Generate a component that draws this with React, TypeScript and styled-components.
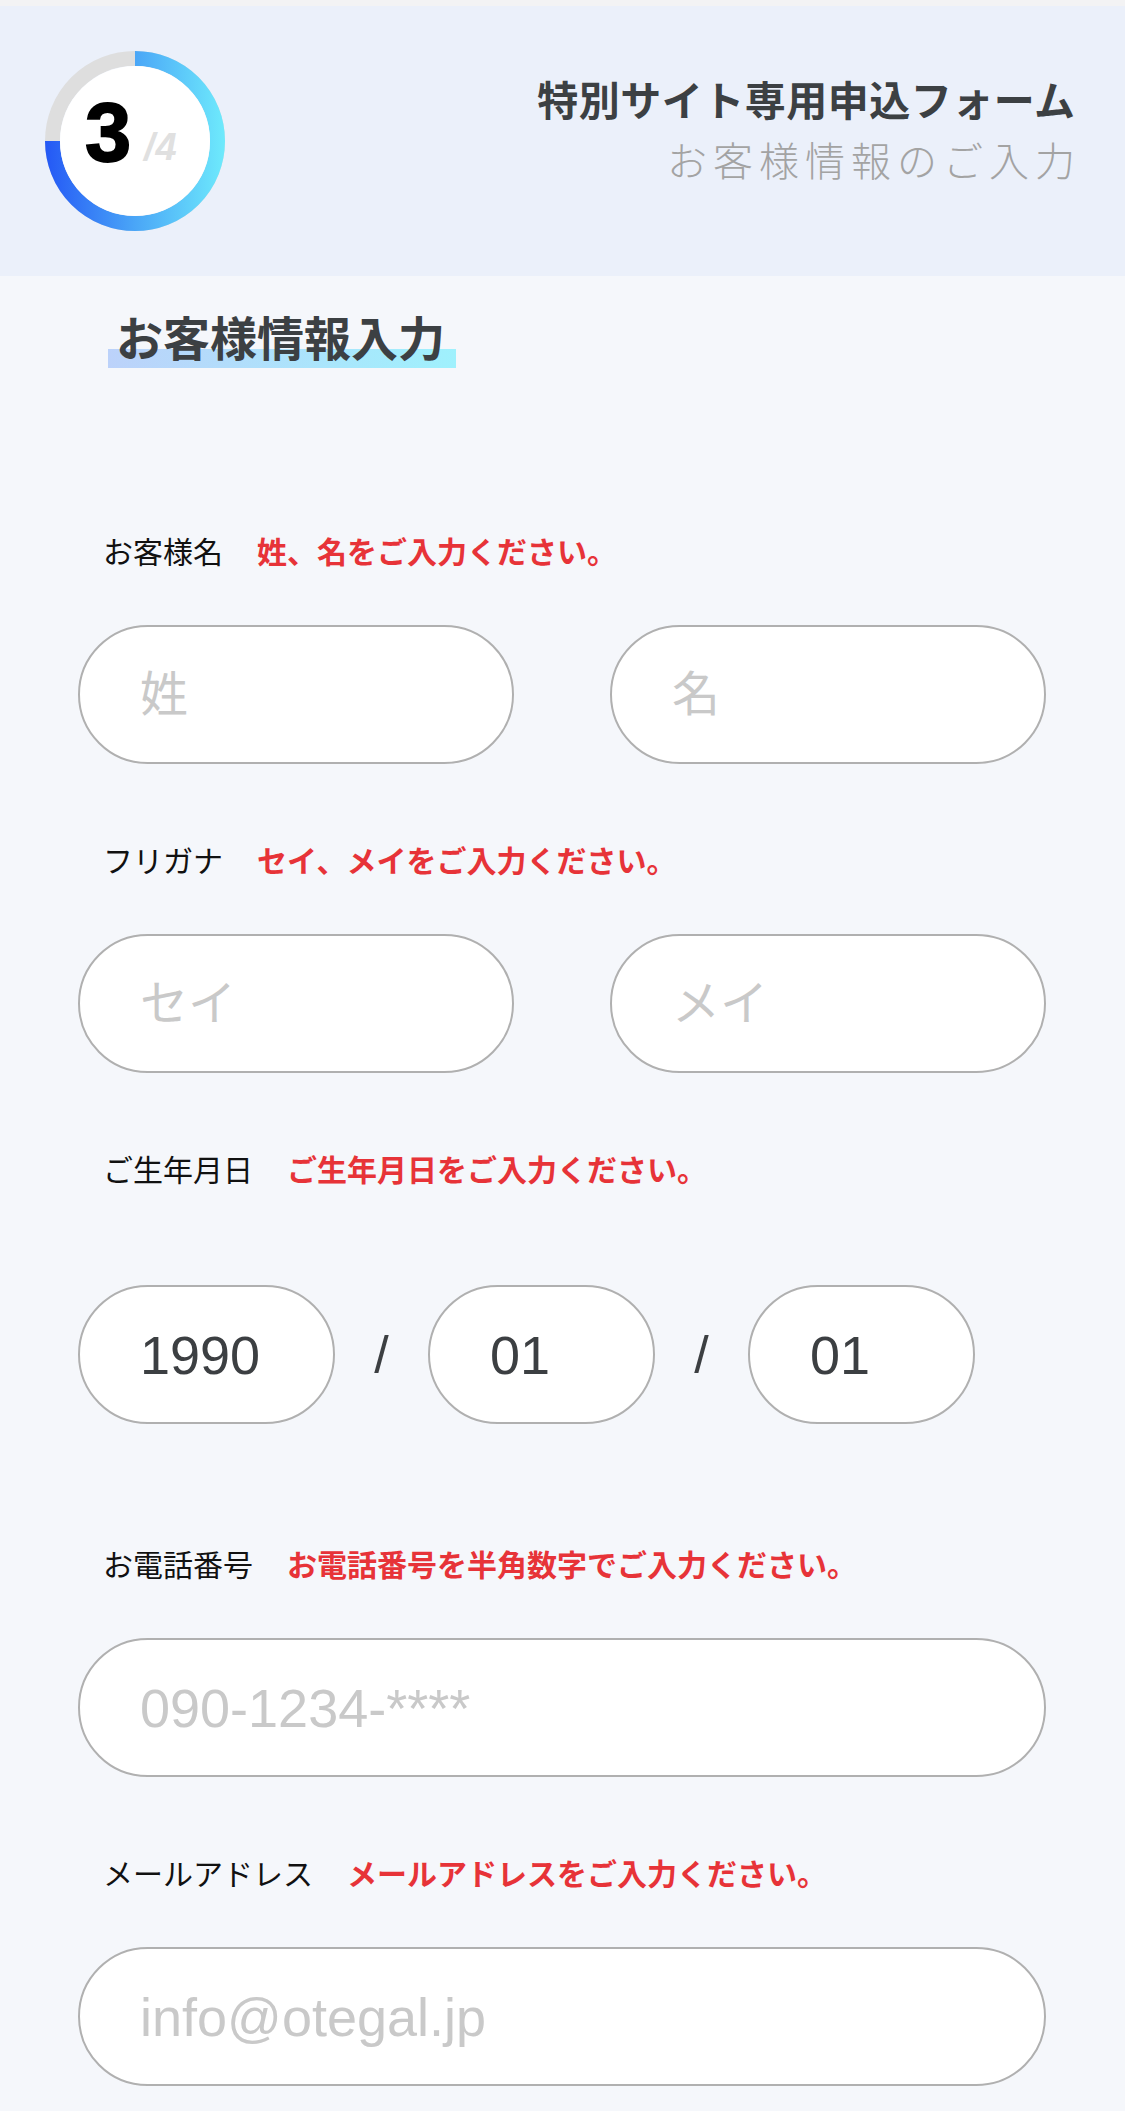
import React from "react";
import styled, { createGlobalStyle } from "styled-components";

const GlobalStyle = createGlobalStyle`
  html, body {
    margin: 0;
    padding: 0;
    background: #f5f7fb;
  }
  body {
    font-family: "Noto Sans CJK JP", "Noto Sans", sans-serif;
  }
  *, *::before, *::after {
    box-sizing: border-box;
  }
`;

const Page = styled.div`
  min-height: 2111px;
  background: #f5f7fb;
`;

const TopStrip = styled.div`
  height: 6px;
  background: #f3f3f4;
`;

const Header = styled.header`
  height: 270px;
  background: #ebf0fa;
  display: flex;
  align-items: center;
  justify-content: space-between;
  padding: 0 50px 0 45px;
`;

const Ring = styled.svg`
  width: 180px;
  height: 180px;
  display: block;
  flex: none;
`;

const TitleBlock = styled.div`
  align-self: flex-start;
  margin-top: 72px;
  display: flex;
  flex-direction: column;
  align-items: flex-end;
`;

const Title = styled.h1`
  margin: 0 -0.5px 0 0;
  font-size: 41px;
  line-height: 41px;
  font-weight: 700;
  letter-spacing: 0.5px;
  color: #3c4043;
`;

const Subtitle = styled.p`
  margin: 20px -6px 0 0;
  font-size: 40px;
  line-height: 40px;
  font-weight: 300;
  letter-spacing: 6px;
  color: #a3a3a3;
`;

const Main = styled.main`
  padding: 36px 79px 40px 78px;
`;

const Heading = styled.h2`
  display: block;
  width: fit-content;
  margin: 0 0 0 30px;
  padding: 0 11px 9px 8px;
  font-size: 47px;
  line-height: 47px;
  font-weight: 700;
  color: #3c4043;
  background: linear-gradient(90deg, #bcd2fa 0%, #9ff1fd 100%) no-repeat left bottom / 100% 19px;
`;

const Form = styled.form`
  margin-top: 167px;
  display: flex;
  flex-direction: column;
`;

const Field = styled.div<{ $spacious?: boolean }>`
  display: flex;
  flex-direction: column;
  margin-bottom: ${(p) => (p.$spacious ? "124px" : "80px")};
`;

const LabelRow = styled.div`
  display: flex;
  align-items: baseline;
  gap: 34px;
  padding-left: 25px;
  height: 30px;
  line-height: 30px;
`;

const Label = styled.label`
  font-size: 30px;
  font-weight: 400;
  color: #111111;
`;

const Hint = styled.span`
  font-size: 30px;
  font-weight: 700;
  color: #e73338;
`;

const InputArea = styled.div<{ $spacious?: boolean }>`
  margin-top: ${(p) => (p.$spacious ? "102px" : "60px")};
`;

const NameGrid = styled.div`
  display: grid;
  grid-template-columns: 1fr 1fr;
  column-gap: 96px;
`;

const DateRow = styled.div`
  display: flex;
  align-items: center;
`;

const TextInput = styled.input<{ $size: number; $w?: number }>`
  display: block;
  width: ${(p) => (p.$w ? `${p.$w}px` : "100%")};
  flex: none;
  height: 139px;
  border: 2.5px solid #b0b0b0;
  border-radius: 70px;
  background: #ffffff;
  padding: 0 30px 0 60px;
  font-family: "Liberation Sans", "Noto Sans CJK JP", sans-serif;
  font-size: ${(p) => p.$size}px;
  color: #3c3f42;
  outline: none;
  &::placeholder {
    color: #c9c9c9;
    opacity: 1;
  }
`;

const Slash = styled.span`
  width: 93px;
  flex: none;
  text-align: center;
  font-family: "Liberation Sans", sans-serif;
  font-size: 52px;
  font-weight: 400;
  color: #3c3f42;
`;

const ProgressRing = () => (
  <Ring viewBox="0 0 180 180" aria-label="3/4">
    <defs>
      <linearGradient id="ringGrad" gradientUnits="userSpaceOnUse" x1="0" y1="0" x2="180" y2="0">
        <stop offset="0" stopColor="#2458f5" />
        <stop offset="0.5" stopColor="#4aa6f7" />
        <stop offset="1" stopColor="#6eeafc" />
      </linearGradient>
    </defs>
    <circle cx="90" cy="90" r="82.5" fill="none" stroke="#dedede" strokeWidth="15" />
    <path d="M 90 7.5 A 82.5 82.5 0 1 1 7.5 90" fill="none" stroke="url(#ringGrad)" strokeWidth="15" />
    <circle cx="90" cy="90" r="75" fill="#ffffff" />
    <text
      x="40"
      y="110"
      fontFamily="'Liberation Sans', Arial, sans-serif"
      fontWeight="700"
      fontSize="83"
      fill="#000"
      stroke="#000"
      strokeWidth="1.8"
    >
      3
    </text>
    <text
      x="99"
      y="109"
      fontFamily="'Liberation Sans', Arial, sans-serif"
      fontWeight="700"
      fontStyle="italic"
      fontSize="38"
      letterSpacing="1"
      fill="#e0e0e0"
    >
      /4
    </text>
  </Ring>
);

export default function App() {
  return (
    <Page>
      <GlobalStyle />
      <TopStrip />
      <Header>
        <ProgressRing />
        <TitleBlock>
          <Title>特別サイト専用申込フォーム</Title>
          <Subtitle>お客様情報のご入力</Subtitle>
        </TitleBlock>
      </Header>
      <Main>
        <Heading>お客様情報入力</Heading>
        <Form onSubmit={(e) => e.preventDefault()}>
          <Field>
            <LabelRow>
              <Label>お客様名</Label>
              <Hint>姓、名をご入力ください。</Hint>
            </LabelRow>
            <InputArea>
              <NameGrid>
                <TextInput $size={48} placeholder="姓" />
                <TextInput $size={48} placeholder="名" />
              </NameGrid>
            </InputArea>
          </Field>

          <Field>
            <LabelRow>
              <Label>フリガナ</Label>
              <Hint>セイ、メイをご入力ください。</Hint>
            </LabelRow>
            <InputArea>
              <NameGrid>
                <TextInput $size={48} placeholder="セイ" />
                <TextInput $size={48} placeholder="メイ" />
              </NameGrid>
            </InputArea>
          </Field>

          <Field $spacious>
            <LabelRow>
              <Label>ご生年月日</Label>
              <Hint>ご生年月日をご入力ください。</Hint>
            </LabelRow>
            <InputArea $spacious>
              <DateRow>
                <TextInput $size={54} $w={257} defaultValue="1990" />
                <Slash>/</Slash>
                <TextInput $size={54} $w={227} defaultValue="01" />
                <Slash>/</Slash>
                <TextInput $size={54} $w={227} defaultValue="01" />
              </DateRow>
            </InputArea>
          </Field>

          <Field>
            <LabelRow>
              <Label>お電話番号</Label>
              <Hint>お電話番号を半角数字でご入力ください。</Hint>
            </LabelRow>
            <InputArea>
              <TextInput $size={54} placeholder="090-1234-****" />
            </InputArea>
          </Field>

          <Field>
            <LabelRow>
              <Label>メールアドレス</Label>
              <Hint>メールアドレスをご入力ください。</Hint>
            </LabelRow>
            <InputArea>
              <TextInput $size={54} placeholder="info@otegal.jp" />
            </InputArea>
          </Field>
        </Form>
      </Main>
    </Page>
  );
}
